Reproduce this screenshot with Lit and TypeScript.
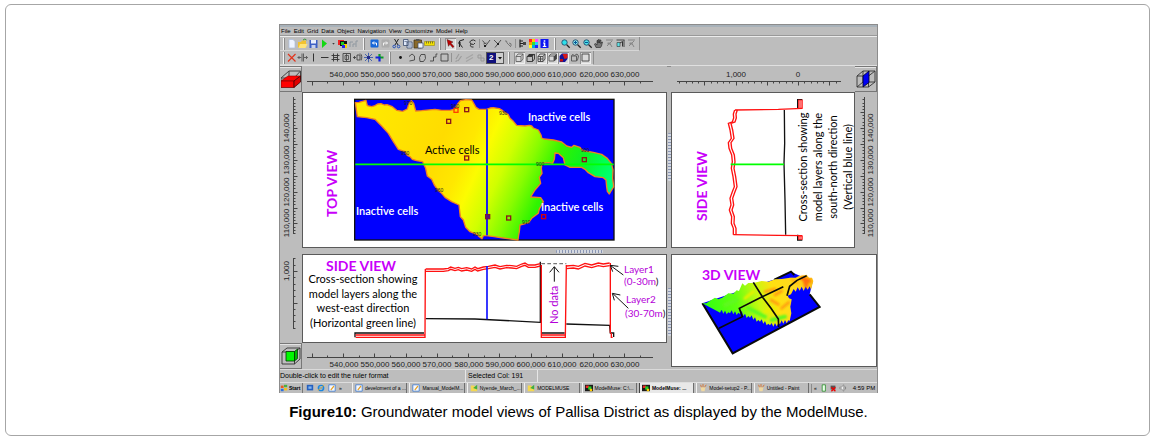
import { LitElement, html, svg, css, type TemplateResult } from "lit";
import { customElement, property } from "lit/decorators.js";

type Pt = [number, number];
const join = (pts: Pt[]) => pts.map((p) => p.join(",")).join(" ");
const shift = (pts: Pt[], dx: number, dy: number): Pt[] => pts.map(([x, y]) => [x + dx, y + dy]);
const range = (n: number) => Array.from({ length: n }, (_, i) => i);

/* ---------- toolbar glyphs, drawn on an 11 x 11 grid ---------- */
const glyphs: Record<string, TemplateResult> = {
  new: svg`<path d="M3 1.500h4l2 2v6.500h-6z" fill="#eef4ff" stroke="#a9bcdc" stroke-width=".7"/>`,
  open: svg`<path d="M1 4h3l1-1.500h4v7h-8z" fill="#f2c230"/><path d="M3 6h7.500l-2 4h-7z" fill="#ffe477"/><path d="M6 2q2-2 3.500 0" stroke="#3a9a3a" fill="none"/>`,
  save: svg`<path d="M1.500 2h8v8h-8z" fill="#3c5fc4"/><path d="M3 2h5v3.500h-5z" fill="#e8eefc"/><path d="M3.500 7h4v3h-4z" fill="#c8d2ec"/>`,
  run: svg`<path d="M3 1.500l5 4-5 4.500z" fill="#12d812"/>`,
  drop: svg`<path d="M3.500 5h4l-2 2z" fill="#111"/>`,
  grid: svg`<path d="M1 2h6v5h-6z" fill="#e22"/><path d="M3 3h7v5h-7z" fill="#111"/><path d="M4 4h3v3h-3z" fill="#2c2"/><path d="M7 6h3v4h-3z" fill="#fc0"/><path d="M5 7h3v3h-3z" fill="#22e"/>`,
  dimchart: svg`<path d="M2 9v-5h3M5 9V6h2.500M8 9V3h2" stroke="#8e979f" fill="none"/>`,
  undo: svg`<rect x="1.500" y="1.500" width="8" height="8" rx="1" fill="#1767d8"/><path d="M3.500 5h4v2.500M5 3.500L3.500 5 5 6.500" stroke="#fff" fill="none"/>`,
  redo: svg`<rect x="1.500" y="1.500" width="8" height="8" rx="1" fill="#acacac"/><path d="M7.500 5h-4v2.500M6 3.500L7.500 5 6 6.500" stroke="#f4f4f4" fill="none"/>`,
  cut: svg`<path d="M3.500 1l3.500 6M7.500 1l-3.500 6" stroke="#222" fill="none"/><circle cx="3.200" cy="8.500" r="1.300" fill="none" stroke="#2450b8"/><circle cx="7.600" cy="8.500" r="1.300" fill="none" stroke="#2450b8"/>`,
  copy: svg`<path d="M1.500 1.500h4.500v6h-4.500zM5 4h5v6h-5z" fill="#dfe8f8" stroke="#3b4b6d" stroke-width=".8"/><path d="M6 6h3M6 8h3M2.500 3.500h2.500" stroke="#3b4b6d" stroke-width=".6"/>`,
  paste: svg`<path d="M1 2h7.500v8h-7.500z" fill="#8a6a2a" stroke="#3a2c12" stroke-width=".7"/><path d="M3 1h3.500v2h-3.500z" fill="#555"/><path d="M5 5h5v5h-5z" fill="#f0f4fc" stroke="#3b4b6d" stroke-width=".7"/>`,
  ruler: svg`<path d="M.5 3.500h10v4h-10z" fill="#f2e000" stroke="#8a7c00" stroke-width=".5"/><path d="M2.500 3.500v2M4.500 3.500v2M6.500 3.500v2M8.500 3.500v2" stroke="#333" stroke-width=".6"/>`,
  pointer: svg`<path d="M2 1.500l6 2.500-2.200 1 3.200 3.500-1.200 1.200-3-3.400-1.300 2z" fill="#c00000" stroke="#300" stroke-width=".4"/>`,
  vertex: svg`<path d="M3.500 9V3L8 1.500M3.500 5.500l3 4" stroke="#222" fill="none"/><circle cx="3.500" cy="5" r="1.200" fill="#222"/>`,
  lasso: svg`<path d="M8.500 3q-2-2-4.500-.5t0 3.500q3 1.500 4-1M4 6q-1.500 2 .5 3h2" stroke="#333" fill="none"/>`,
  splitA: svg`<path d="M1.500 2.500l2.500 3M4.500 8L9 2M2.500 6l3-1" stroke="#444" stroke-width=".9" fill="none"/><path d="M3 7h2v2h-2z" fill="#222"/>`,
  splitB: svg`<path d="M2 2l3 3M3 9.500L9 2" stroke="#444" stroke-width=".9" fill="none"/><path d="M5 5h2v2h-2z" fill="#222"/>`,
  splitC: svg`<path d="M2 3q2-1 2 2M4 5l4 4M6 5q3 0 2 3" stroke="#777" fill="none"/>`,
  tree: svg`<path d="M3 1.500v8M3 3h3M3 5.500h5M3 8h3" stroke="#222" stroke-width="1.200"/><path d="M6 4h3v3h-3z" fill="#444"/>`,
  palette: svg`<path d="M1 1h3v3h-3z" fill="#f22"/><path d="M4 1h3v3h-3z" fill="#fc0"/><path d="M7 1h3v3h-3z" fill="#f4f"/><path d="M1 4h3v3h-3z" fill="#f90"/><path d="M4 4h3v3h-3z" fill="#3d3"/><path d="M7 4h3v3h-3z" fill="#2cf"/><path d="M1 7h3v3h-3z" fill="#ff2"/><path d="M4 7h3v3h-3z" fill="#0ad"/><path d="M7 7h3v3h-3z" fill="#22f"/>`,
  info: svg`<path d="M1.500 1h8v9h-8z" fill="#0c14f4"/><path d="M4.700 2.200h1.600v1.500h-1.600zM4 4.500h2.300v3.500h1v1h-3.500v-1h1v-2.500h-.8z" fill="#fff"/>`,
  zoom: svg`<circle cx="4.500" cy="4.500" r="2.700" fill="#2fe0ea" stroke="#246" stroke-width=".8"/><path d="M6.700 6.700l3 3" stroke="#222" stroke-width="1.300"/>`,
  zoomIn: svg`<circle cx="4.500" cy="4.500" r="2.700" fill="#8fe8ea" stroke="#246" stroke-width=".9"/><path d="M3 4.500h3M4.500 3v3" stroke="#03579b"/><path d="M6.700 6.700l3 3" stroke="#222" stroke-width="1.300"/>`,
  zoomOut: svg`<circle cx="4.500" cy="4.500" r="2.700" fill="#4fe0e6" stroke="#246" stroke-width=".9"/><path d="M3 4.500h3" stroke="#03579b"/><path d="M6.700 6.700l3 3" stroke="#222" stroke-width="1.300"/>`,
  hand: svg`<path d="M3 9.500L1.500 6l1-.5L4 7V2.500h1V5l.3-3.500h1V5l.7-3h1l-.3 3.500 1-1.500h.8l-1 4-1 1.500z" fill="#777" stroke="#222" stroke-width=".6"/>`,
  wedge: svg`<path d="M2 2h7M3 8l5-5M4 5.500h2l2 3.500" stroke="#858585" fill="none"/><path d="M3.500 4.500h3v2h-3z" fill="#888"/>`,
  snap: svg`<path d="M1.500 2h8M9 2v7" stroke="#444" fill="none"/><path d="M2 4.500h3v4h-3z" fill="#5de0e6" stroke="#333" stroke-width=".6"/><path d="M5 5l2.500-1.500v5" stroke="#333" fill="none"/>`,
  del: svg`<path d="M2 2l7.500 7.500M9.500 2L2 9.500" stroke="#e2341c" stroke-width="1.200"/>`,
  move: svg`<path d="M5 1.500v8M6.500 1.500v8M.8 5.500h3.500M7 5.500h3.500M2.500 4L1 5.500 2.500 7M9 4l1.500 1.500L9 7" stroke="#555" stroke-width=".9" fill="none"/>`,
  vline: svg`<path d="M5.500 1.500v8" stroke="#333"/>`,
  hline: svg`<path d="M2 5.500h7.500" stroke="#333"/>`,
  hash: svg`<path d="M3.500 1.500v8M7.500 1.500v8M1.500 3.500h8M1.500 7.500h8M4 5.500h3" stroke="#333" stroke-width=".9"/>`,
  cell: svg`<path d="M2 1.500h7.500v8h-7.500z" fill="none" stroke="#444" stroke-width=".9"/><path d="M4 3.500h3.500v4h-3.500zM5.500 1.500v8" stroke="#444" stroke-width=".8" fill="none"/>`,
  rotate: svg`<path d="M1 5.500h3M2.500 4v3M5 3h3v5h-3zM8 1.500q3 2 1 7" stroke="#444" stroke-width=".9" fill="none"/>`,
  spark: svg`<path d="M5.500 .8v9.500M1 5.500h9M2 2l7 7M9 2L2 9" stroke="#2a4ea8" stroke-width=".8"/><path d="M4 4h3v3h-3z" fill="#222c8c"/>`,
  plus: svg`<path d="M5.500 2v4M5.500 5.500h4" stroke="#0b9d26" stroke-width="2.200"/><path d="M1.500 5.500h4.500M5.500 5v4.500" stroke="#1424d8" stroke-width="2.200"/>`,
  dot: svg`<circle cx="5.500" cy="5.500" r="1.400" fill="#111"/>`,
  poly: svg`<path d="M3 4.500l3-2.500 2.500 2v4l-5 1" stroke="#444" stroke-width=".9" fill="none"/>`,
  polygon: svg`<path d="M2.500 5.500L4 2.500h4l.5 4-2 3h-3.500z" stroke="#444" stroke-width=".9" fill="none"/>`,
  step: svg`<path d="M2 9h3.500V5H8V2h1.500" stroke="#444" stroke-width=".9" fill="none"/>`,
  rect: svg`<path d="M2 2h7v7h-7z" stroke="#444" stroke-width=".9" fill="none"/>`,
  ghostA: svg`<path d="M3 7l3-5M5 9l3.500-5M2.500 9.500l2-1" stroke="#9c9c9c" stroke-width="1.200"/>`,
  ghostB: svg`<path d="M2 6.500l7-4M2 9.500l7-4" stroke="#a4a4a4" stroke-width="1.200"/>`,
  ghostC: svg`<path d="M3 3h3v3h-3zM6 6h3v3h-3z" stroke="#999" fill="none"/>`,
  box: svg`<path d="M2 4.500h5v5h-5zM2 4.500l2-2.500h5v5l-2 2.500M7 4.500l2-2.500" stroke="#555" stroke-width=".8" fill="none"/>`,
  boxTop: svg`<path d="M2 4.500l2-2.500h5.500l-2 2.500z" fill="#333"/><path d="M2 4.500h5.500v5h-5.500zM9.500 2v5l-2 2.500" stroke="#333" stroke-width=".9" fill="none"/>`,
  boxFront: svg`<path d="M2 4.500h5v5h-5zM2 4.500l2-2.500h5v5l-2 2.500M7 4.500l2-2.500M4.500 4.500v5M2 7h5" stroke="#444" stroke-width=".9" fill="none"/>`,
  boxSide: svg`<path d="M2 4h5v5h-5zM2 4l2-2h5.500v5l-2.500 2" stroke="#555" stroke-width=".9" fill="none"/><path d="M7 4l2.500-2v5l-2.500 2z" fill="#444"/>`,
  boxColor: svg`<path d="M1.500 4l2.500-2.500h5.500v5.500l-2.500 3h-5.500z" fill="#14149a"/><path d="M4.500 2h5v4l-3 1z" fill="#d81818"/><path d="M2 7h3v2.500h-3z" fill="#c01010"/>`,
  boxWire: svg`<path d="M2.500 4h5v5h-5zM2.500 4l1-1.500 2 1 2.500-1.500 1.500 2-1 4-1 1" stroke="#555" stroke-width=".9" fill="none"/>`,
};

type Tool = { icon: string; name: string; down?: boolean };
const t = (icon: string, name: string, down = false): Tool => ({ icon, name, down });
const rowOne: Tool[][] = [
  [t("new", "New"), t("open", "Open"), t("save", "Save"), t("run", "Run"), t("drop", "Run options"), t("grid", "Color grid"), t("dimchart", "Charts")],
  [t("undo", "Undo"), t("redo", "Redo"), t("cut", "Cut"), t("copy", "Copy"), t("paste", "Paste"), t("ruler", "Rulers")],
  [t("pointer", "Select", true), t("vertex", "Select vertices"), t("lasso", "Lasso")],
  [t("splitA", "Insert point"), t("splitB", "Delete segment"), t("splitC", "Reverse")],
  [t("tree", "Objects"), t("palette", "Data display"), t("info", "Information")],
  [t("zoom", "Zoom"), t("zoomIn", "Zoom in"), t("zoomOut", "Zoom out"), t("hand", "Pan"), t("wedge", "Extents"), t("snap", "Go to"), t("wedge", "Exaggeration")],
];
const rowTwo: Tool[][] = [
  [t("del", "Delete"), t("move", "Move lines"), t("vline", "Add column"), t("hline", "Add row"), t("hash", "Generate grid"), t("cell", "Subdivide"), t("rotate", "Rotate grid"), t("spark", "Smooth grid"), t("plus", "Grid angle")],
  [t("dot", "Point"), t("poly", "Polyline"), t("polygon", "Polygon"), t("step", "Straight line"), t("rect", "Rectangle")],
  [t("ghostA", "Add part"), t("ghostB", "Add line part"), t("ghostC", "Add area part")],
  [t("box", "Shell", true), t("boxTop", "Top"), t("boxFront", "Front", true), t("boxSide", "Side", true), t("boxColor", "Colored", true), t("boxWire", "Wire"), t("rect", "Frame", true)],
];

@customElement("tool-bar")
export class ToolBar extends LitElement {
  static styles = css`
    :host { display: block; background: #bdbdbd; border-top: 1px solid #ececec; border-bottom: 1px solid #e0e0e0; }
    .row { display: flex; height: 14px; width: max-content; align-items: center; border: 1px solid #d6d6d6; border-width: 0 1px 1px 0; border-right-color: #8f8f8f; padding: 0 2px; box-sizing: border-box; }
    .grip { width: 1px; height: 12px; border-left: 1px solid #f4f4f4; background: #8a8a8a; margin: 0 4px; }
    .grip.first { margin: 0 1px; }
    .thin { width: 1px; height: 9px; background: #939393; margin: 0 1px; }
    button { width: 11px; height: 12px; padding: 0; border: 0; background: none; display: block; }
    button.down { background: #d9d9d9; box-shadow: inset 1px 1px #8f8f8f, inset -1px -1px #eee; }
    button.slim { width: 7px; }
    svg { display: block; width: 11px; height: 11px; }
    .slim svg { width: 7px; }
    .pick { display: grid; align-items: center; width: 18px; height: 12px; }
    .pick > * { grid-area: 1 / 1; }
    .pick svg { width: 8px; height: 8px; justify-self: end; pointer-events: none; }
    select { width: 18px; height: 12px; padding: 0 8px 0 2px; border: 1px solid #555; border-radius: 0; appearance: none; font: bold 8px/10px "Liberation Sans", sans-serif; color: #fff; background: linear-gradient(90deg, #10107c 9px, #cfcfcf 9px); }
  `;
  private button(x: Tool) {
    return html`<button class="${x.down ? "down" : ""} ${x.icon === "drop" ? "slim" : ""}" title=${x.name} aria-label=${x.name}>
      <svg viewBox="0 0 11 11">${glyphs[x.icon]}</svg></button>`;
  }
  render() {
    const grip = html`<span class="grip"></span>`;
    const thin = html`<span class="thin"></span>`;
    const g = (tools: Tool[]) => tools.map((x) => this.button(x));
    return html`
      <div class="row"><span class="grip first"></span>${g(rowOne[0])}${grip}${g(rowOne[1])}${grip}${g(rowOne[2])}${thin}${g(rowOne[3])}${thin}${g(rowOne[4])}${grip}${g(rowOne[5])}</div>
      <div class="row"><span class="grip first"></span>${g(rowTwo[0])}${grip}${g(rowTwo[1])}${thin}${g(rowTwo[2])}
        <span class="pick"><select aria-label="Vertical cells"><option>2</option></select><svg viewBox="0 0 8 8"><path d="M2 3h4L4 5.500z" fill="#111"/></svg></span>${grip}${g(rowTwo[3])}</div>`;
  }
}

/* ---------- rulers ---------- */
@customElement("ruler-strip")
export class RulerStrip extends LitElement {
  @property() side: "top" | "bottom" | "left" | "right" = "top";
  @property({ type: Number }) length = 100;
  @property({ type: Number }) thickness = 26;
  @property({ attribute: false }) line: Pt = [0, 100];
  @property({ type: Number }) origin = 0;
  @property({ type: Number }) step = 10;
  @property({ type: Number }) majorEvery = 2;
  @property({ attribute: false }) labels: [number, string][] = [];
  static styles = css`
    :host { display: block; background: #bdbdbd; min-width: 0; min-height: 0; }
    svg { display: block; width: 100%; height: 100%; }
    text { font: 8px "Liberation Sans", sans-serif; fill: #222; text-anchor: middle; }
    path { stroke: #444; fill: none; }
  `;
  render() {
    const flat = this.side === "top" || this.side === "bottom";
    const base = { top: 15.5, bottom: 14.5, left: 13.5, right: 9.5 }[this.side];
    const textAt = { top: 11, bottom: 24, left: 9, right: 18 }[this.side];
    const dir = this.side === "top" || this.side === "left" ? 1 : -1;
    const [a, b] = this.line;
    const first = Math.ceil((a - this.origin) / this.step);
    const count = Math.floor((b - this.origin) / this.step) - first + 1;
    let d = flat ? `M${a} ${base}H${b}` : `M${base} ${a}V${b}`;
    for (const i of range(count)) {
      const k = first + i;
      const p = Math.round(this.origin + k * this.step) + 0.5;
      const len = (k % this.majorEvery === 0 ? 4 : 2) * dir;
      d += flat ? `M${p} ${base}v${len}` : `M${base} ${p}h${len}`;
    }
    const [w, h] = flat ? [this.length, this.thickness] : [this.thickness, this.length];
    return html`<svg viewBox="0 0 ${w} ${h}">
      ${svg`<path d=${d}/>`}
      ${this.labels.map(([p, s]) =>
        flat ? svg`<text x=${p} y=${textAt}>${s}</text>` : svg`<text transform="translate(${textAt} ${p}) rotate(-90)">${s}</text>`
      )}</svg>`;
  }
}

/* ---------- the four model views ---------- */
const viewStyles = css`
  :host { display: block; background: #fff; outline: 1px solid #5a5a5a; outline-offset: -1px; min-width: 0; }
  svg { display: block; width: 100%; height: auto; }
  text { font: 11px Lato, sans-serif; fill: #000; }
  .head { font: bold 14px Lato, sans-serif; fill: #c800fa; }
  .mid { text-anchor: middle; }
  .white { fill: #fff; font-weight: 600; }
  .tag { font-size: 10px; fill: #b400d8; }
  .tag.big { font-size: 11px; }
  .tick { font: 5px "Liberation Sans", sans-serif; fill: #222; }
  .red { fill: none; stroke: #ff1010; stroke-width: 4; }
  .black { fill: none; stroke: #111; stroke-width: 4; }
`;

const northWest: Pt[] = [[241,38],[252,37],[273,31],[277,47],[290,50],[300,47],[308,42],[318,41],[328,45],[336,44],[352,50],[365,61],[383,64],[397,57],[402,40],[409,32],[416,40],[422,63],[440,62],[480,58],[500,61],[525,61],[538,58],[548,42],[556,32],[572,29],[590,30]];
const east: Pt[] = [[8,35],[18,52],[27,58],[50,58],[60,54],[70,53],[88,56],[98,62],[105,68],[114,73],[120,85],[130,94],[140,106],[165,108],[178,106],[185,108],[190,114],[205,120],[213,135],[215,144],[222,147],[250,150],[275,156],[290,168],[305,172],[312,166],[330,172],[336,180],[345,183],[370,187],[395,193],[412,205],[424,220],[429,240],[428,265],[431,290],[425,300],[418,312],[412,304],[410,290],[408,270],[400,263],[375,260],[355,248],[345,238],[335,232],[300,232],[285,225],[280,203],[265,190],[255,189],[253,208],[248,220],[235,218],[216,220],[214,235],[216,250],[208,262],[212,280],[195,300],[182,321],[212,323],[220,335],[208,357],[205,370],[185,385],[176,398],[150,405],[148,425],[146,435],[144,450],[100,444],[72,440],[50,437],[40,437],[36,446],[28,440],[20,433],[0,425]];
const southWest: Pt[] = [[572,412],[565,390],[556,380],[552,345],[530,335],[510,322],[498,308],[490,302],[478,285],[470,268],[457,258],[452,235],[443,215],[425,212],[412,208],[405,200],[397,196],[390,185],[370,178],[355,155],[340,130],[320,108],[300,88],[275,83],[247,80]];
const basin = [...northWest, ...shift(east, 585, 0), ...southWest];

const wells: Pt[] = [[575,59],[521,94],[575,204],[928,209],[638,380],[701,384]];

@customElement("top-view")
export class TopView extends LitElement {
  static styles = viewStyles;
  render() {
    return html`<svg viewBox="302 92 365 156" role="img" aria-label="Top view of the model grid">
      <defs>
        <linearGradient id="head" gradientUnits="userSpaceOnUse" x1="241" y1="100" x2="1016" y2="450">
          <stop offset="0" stop-color="#ffea00"/><stop offset=".3" stop-color="#ffdc00"/><stop offset=".4" stop-color="#ffe800"/>
          <stop offset=".46" stop-color="#fcfc00"/><stop offset=".54" stop-color="#d0ff00"/><stop offset=".62" stop-color="#88fc00"/>
          <stop offset=".7" stop-color="#30f400"/><stop offset=".78" stop-color="#10f020"/><stop offset=".85" stop-color="#00ff50"/><stop offset=".92" stop-color="#00ff80"/>
        </linearGradient>
      </defs>
      <g transform="translate(275 90) scale(.33333)">
        <rect x="239" y="28" width="778" height="422" fill="#0000ff" stroke="#101010" stroke-width="4"/>
        <polygon points=${join(basin)} fill="url(#head)" stroke="#f08020" stroke-width="4" stroke-linejoin="round"/>
        <path d="M636 58V436" stroke="#1c20e8" stroke-width="6"/>
        <path d="M241 223H1016" stroke="#00ff00" stroke-width="5"/>
        ${wells.map(([x, y]) => svg`<rect x=${x - 6} y=${y - 6} width="12" height="12" fill="none" stroke="#8c1818" stroke-width="4"/>`)}
        <rect x="537" y="55" width="12" height="12" fill="none" stroke="#ff4000" stroke-width="4"/>
        <rect x="800" y="374" width="12" height="12" fill="none" stroke="#d00010" stroke-width="4"/>
        <rect x="632" y="374" width="12" height="12" fill="#5a1878"/>
      </g>
      <text class="tick" x="404" y="105">970</text><text class="tick" x="451" y="108">960</text>
      <text class="tick" x="401" y="155">950</text><text class="tick" x="435" y="192">960</text>
      <text class="tick" x="499" y="115">930</text><text class="tick" x="581" y="152">900</text>
      <text class="tick" x="536" y="166">900</text><text class="tick" x="522" y="224">910</text>
      <text class="tick" x="473" y="236">930</text>
      <text class="white" x="528" y="121">Inactive cells</text>
      <text class="white" x="356" y="215">Inactive cells</text>
      <text class="white" x="541" y="211">Inactive cells</text>
      <text x="425" y="154">Active cells</text>
      <text class="head" transform="translate(337 217) rotate(-90)">TOP VIEW</text>
    </svg>`;
  }
}

const sideWave: Pt[] = [[217,60],[213,72],[214,84],[210,96],[198,100],[203,120],[207,145],[198,158],[200,175],[208,195],[210,215],[207,235],[212,260],[216,290],[210,305],[203,325],[206,345],[201,360],[208,380],[207,400],[213,415],[213,434]];

@customElement("north-south-view")
export class NorthSouthView extends LitElement {
  static styles = viewStyles;
  render() {
    const note = ["Cross-section showing", "model layers along the", "south-north direction", "(Vertical blue line)"];
    return html`<svg viewBox="671 92 184 156" role="img" aria-label="South to north cross-section">
      <g transform="translate(665 90) scale(.33333)">
        <path class="black" d="M398 57V29H412M358 60L359 160 357 220 360 330 362 434M398 434V450H412"/>
        <rect x="400" y="30" width="12" height="26" fill="#ff7070" stroke="#ff1010" stroke-width="2"/>
        <rect x="400" y="438" width="12" height="10" fill="#ff7070" stroke="#ff1010" stroke-width="2"/>
        <path class="red" d="M412 55L340 58 210 60M205 434L340 436 412 437"/>
        <polyline class="red" points=${join(sideWave)}/>
        <polyline class="red" points=${join(shift(sideWave, -8, 0))}/>
        <path d="M197 223H357" stroke="#00ff00" stroke-width="5"/>
      </g>
      <text class="head" transform="translate(707 221) rotate(-90)">SIDE VIEW</text>
      ${note.map((s, i) => svg`<text class="mid" transform="translate(${807 + i * 15} 167) rotate(-90)">${s}</text>`)}
    </svg>`;
  }
}

const westTop: Pt[] = [[452,72],[490,72],[505,72],[520,70],[527,66],[540,70],[550,67],[560,71],[575,68],[590,72],[600,66],[608,71],[625,66],[640,64],[660,60],[675,65],[695,61],[710,62],[725,64],[740,57],[750,54],[760,60],[780,60],[796,56]];
const eastTop: Pt[] = [[874,63],[895,61],[910,64],[930,55],[950,60],[970,54],[985,57],[1004,54]];

@customElement("west-east-view")
export class WestEastView extends LitElement {
  static styles = viewStyles;
  render() {
    const note = ["Cross-section showing", "model layers along the", "west-east direction", "(Horizontal green line)"];
    return html`<svg viewBox="302 254 365 89" role="img" aria-label="West to east cross-section">
      <g transform="translate(275 245) scale(.33333)">
        <path class="black" d="M240 277V264H447M452 221L600 222 796 232V50M798 264H869M874 237L1004 241 1006 264H1016V276"/>
        <path class="red" d="M242 270H449M242 277H450L451 72M799 60V277H871L874 60M799 270H871M1006 54L1006 264M1009 264V277H1013"/>
        <polyline class="red" points=${join(westTop)}/><polyline class="red" points=${join(shift(westTop, 0, 7))}/>
        <polyline class="red" points=${join(eastTop)}/><polyline class="red" points=${join(shift(eastTop, 0, 8))}/>
        <path d="M636 63V223" stroke="#1010ff" stroke-width="5"/>
        <path d="M799 56H874" stroke="#777" stroke-width="4" stroke-dasharray="11 7"/>
        <path d="M838 110V66M824 82L838 65 852 82M1045 90L1007 62M1013 80L1006 61 1030 64M1060 190L1014 146M1018 166L1012 145 1036 150" stroke="#111" stroke-width="3" fill="none"/>
      </g>
      <text class="head" x="326" y="271">SIDE VIEW</text>
      ${note.map((s, i) => svg`<text class="mid" x="363" y=${283 + Math.round(i * 14.6)}>${s}</text>`)}
      <text class="tag big" transform="translate(558 324) rotate(-90)">No data</text>
      <text class="tag" x="624" y="273">Layer1</text><text class="tag" x="624" y="285">(0-30m<tspan fill="#111">)</tspan></text>
      <text class="tag" x="626" y="303">Layer2</text><text class="tag" x="625" y="317">(30-70m<tspan fill="#111">)</tspan></text>
    </svg>`;
  }
}

const ridge: Pt[] = [[112,175],[124,175],[135,167],[150,158],[160,163],[172,158],[190,145],[205,146],[215,136],[222,138],[232,115],[240,122],[250,114],[265,114],[290,108],[310,110],[330,103],[350,102],[375,98],[392,98],[400,94],[425,89],[432,98],[441,98],[445,108],[438,134]];
const fringeEast: Pt[] = [[434,124],[428,134],[422,124],[416,138],[410,125],[404,137],[398,127],[392,140],[386,132],[378,148],[368,152],[372,160],[380,163],[376,185],[379,205],[374,228]];
const fringeSouth: Pt[] = range(43).map((i) => {
  const x = 370 - i * 5;
  const base = x > 320 ? 226 + (370 - x) * 0.3 : x > 230 ? 240 - (320 - x) * 0.38 : 204 - (230 - x) * 0.06;
  return [x, Math.round(base + [0, 7, -4, 5, -6, 3][i % 6])] as Pt;
});

@customElement("solid-view")
export class SolidView extends LitElement {
  static styles = viewStyles;
  render() {
    return html`<svg viewBox="671 254 206 113" role="img" aria-label="3D view of the model">
      <defs>
        <linearGradient id="relief" gradientUnits="userSpaceOnUse" x1="115" y1="190" x2="440" y2="110">
          <stop offset="0" stop-color="#30ff10"/><stop offset=".3" stop-color="#60ff10"/><stop offset=".5" stop-color="#c8f810"/>
          <stop offset=".65" stop-color="#ffe010"/><stop offset=".85" stop-color="#ffd820"/><stop offset="1" stop-color="#ffc010"/>
        </linearGradient>
        <filter id="soft"><feGaussianBlur stdDeviation="3"/></filter>
      </defs>
      <g transform="translate(665 245) scale(.33333)">
        <polygon points="112,175 203,325 464,186 434,148 443,110 378,80 325,104" fill="#0000ff"/>
        <path d="M112 175L203 325 464 186 434 148M388 90L378 80 328 104" fill="none" stroke="#0a0a0a" stroke-width="6"/>
        <polygon points=${join([...ridge, ...fringeEast, ...fringeSouth])} fill="url(#relief)"/>
        <g filter="url(#soft)" fill="none" stroke-linecap="round">
          <path d="M300 140L330 132M330 150L350 138M350 190L372 172M318 165L340 178" stroke="#ff9a10" stroke-width="8"/>
          <path d="M412 100L432 108M420 108L424 122" stroke="#ff7008" stroke-width="12"/>
          <path d="M240 160L265 140M300 200L330 190" stroke="#e8f000" stroke-width="9"/>
          <path d="M180 180L215 165M250 190L300 215M320 225L360 215" stroke="#60f820" stroke-width="12"/>
          <path d="M380 104L395 112" stroke="#ffae10" stroke-width="8"/>
        </g>
        <path d="M265 112L294 158 318 190 340 222 341 246M162 250L232 215 223 190 290 156 355 125M366 152L374 124 396 106 425 92" fill="none" stroke="#0a0a0a" stroke-width="5"/>
      </g>
      <text class="head" x="702" y="280">3D VIEW</text>
    </svg>`;
  }
}

/* ---------- window ---------- */
const eastings: [number, string][] = range(10).map((i) => [Math.round(41.5 + i * 31.25), `${540 + i * 10},000`]);
const northings: [number, string][] = range(4).map((i) => [Math.round(36 + i * 31.8), `${140 - i * 10},000`]);

const page = svg`<path d="M1 1h8v8h-8z" fill="#f4f8ff" stroke="#3b78d0"/><path d="M3 7l4-5 1 1-4 5z" fill="#e8a020"/>`;
const folder = svg`<path d="M1 2h4l1 1h3v6h-8z" fill="#f4d850"/><path d="M4 5l5-4v6z" fill="#3fae3f"/>`;
const muse = svg`<path d="M0 1h10v8h-10z" fill="#1b1b1b"/><path d="M1 2h4v3h-4z" fill="#e22"/><path d="M4 3h4v4h-4z" fill="#2c2"/><path d="M6 6h3v3h-3z" fill="#fc0"/>`;
const paint = svg`<path d="M2 4h6l-1 5h-4z" fill="#f0d8a0"/><path d="M3 4l-1-3M5 4V0M7 4l2-3" stroke="#d86a20"/>`;
const tasks = [
  { icon: page, name: "develoment of a ..." },
  { icon: page, name: "Manual_ModelM..." },
  { icon: folder, name: "Nyende_March_..." },
  { icon: folder, name: "MODELMUSE" },
  { icon: muse, name: "ModelMuse: C:\\..." },
  { icon: muse, name: "ModelMuse: ...", active: true },
  { icon: paint, name: "Model-setup2 - P..." },
  { icon: paint, name: "Untitled - Paint" },
];

@customElement("app-root")
export class AppRoot extends LitElement {
  static styles = css`
    :host { display: block; font-family: "Liberation Sans", sans-serif; color: #000; }
    .card { margin: 4px 7px 0 5px; padding: 19px 16px 14px 18px; border: 1px solid #a6a6a6; border-radius: 6px; background: #fff; }
    figure { margin: 0 auto; max-width: 599px; }
    .window { border: 1px solid #8c8c8c; border-bottom: 0; background: #bdbdbd; overflow: hidden; }
    .strip { height: 2px; background: #a8b2ba; }
    .menu { display: flex; gap: 3px; height: 9px; padding-left: 1px; border-bottom: 1px solid #999; box-sizing: border-box; }
    button { font: inherit; color: inherit; border: 0; background: none; padding: 0; }
    .menu button { font-size: 6px; line-height: 8px; }
    .work { display: grid; grid-template-columns: 22px minmax(0, 365fr) 4px minmax(0, 184fr) 22px; grid-template-rows: 26px auto 6px auto 26px; border-top: 0; box-shadow: inset 0 1px #8c8c8c; }
    .solid { grid-column: 4 / 6; grid-row: 4 / 6; align-self: start; }
    .corner { border: 1px solid #777; border-left: 0; box-shadow: inset 0 1px #e4e4e4; display: flex; align-items: center; justify-content: center; }
    .corner svg { display: block; width: 20px; height: 20px; }
    .split { display: flex; align-items: center; justify-content: center; background: #bdbdbd; }
    .grab { border-radius: 1px; }
    .split.v .grab { width: 3px; height: 48px; background: repeating-linear-gradient(#8a96b4 0 1px, #d4d8e0 1px 3px); }
    .split.upper { padding-bottom: 26px; }
    .split.lower { padding-top: 26px; }
    .split.h { justify-content: flex-end; padding-right: 64px; }
    .split.h .grab { width: 47px; height: 3px; background: repeating-linear-gradient(90deg, #8a96b4 0 1px, #d4d8e0 1px 3px); }
    .status { display: flex; height: 14px; box-sizing: border-box; border-top: 1px solid #dadada; border-bottom: 1px solid #dedede; font-size: 7px; line-height: 12px; }
    .status span { box-sizing: border-box; border-right: 1px solid #e6e6e6; white-space: nowrap; }
    .hint { flex: 0 0 186px; }
    .col { flex: 0 0 72px; padding-left: 2px; }
    .tasks { display: flex; align-items: center; height: 10px; font-size: 5px; line-height: 9px; gap: 2px; overflow: hidden; }
    .tasks svg { width: 8px; height: 8px; flex: none; display: block; }
    .tasks button { display: flex; align-items: center; gap: 2px; height: 10px; white-space: nowrap; overflow: hidden; box-sizing: border-box; }
    .tasks .start { width: 23px; font-weight: bold; border-right: 1px solid #777; gap: 1px; flex: none; }
    .quick { display: flex; gap: 3px; width: 44px; padding-left: 1px; align-items: center; flex: none; }
    .tasks .task { flex: 1 1 56px; min-width: 0; padding-left: 2px; border-left: 1px solid #f2f2f2; border-right: 1px solid #6e6e6e; }
    .tasks .active { background: #e8e8e8; font-weight: bold; border-left-color: #444; }
    .tray { display: flex; gap: 2px; align-items: center; flex: 0 0 63px; border-left: 1px solid #8c8c8c; padding-left: 2px; }
    .tray time { padding-left: 4px; font-size: 6px; }
    figcaption { padding-top: 10px; font-size: 15px; line-height: 18px; text-align: center; }
  `;
  render() {
    const menus = ["File", "Edit", "Grid", "Data", "Object", "Navigation", "View", "Customize", "Model", "Help"];
    return html`<main class="card"><figure>
      <div class="window">
        <div class="strip"></div>
        <nav class="menu">${menus.map((m) => html`<button>${m}</button>`)}</nav>
        <tool-bar></tool-bar>
        <div class="work">
          <button class="corner" aria-label="Top view layer">
            <svg viewBox="0 0 20 20"><path d="M0 9L8 2h11.500v8L13 18H0z" fill="none" stroke="#444"/><path d="M0 9h13V18M13 9l6.500-7M8 2v7" stroke="#444" fill="none"/><path d="M0 12l7-5h12.500L13 12z" fill="#f00" stroke="#900" stroke-width=".6"/><path d="M0 12h13v6.500H0z" fill="#f00" stroke="#600" stroke-width=".6"/><path d="M13 12l6.500-5v6L13 18.500z" fill="#e00000" stroke="#400" stroke-width=".8"/></svg>
          </button>
          <ruler-strip side="top" length="365" .line=${[5, 351]} origin="41" step="15.625" .labels=${eastings}></ruler-strip>
          <span></span>
          <ruler-strip side="top" length="184" .line=${[6, 170]} origin="127" step="6.25" majorEvery="5" .labels=${[[65, "1,000"], [127, "0"]]}></ruler-strip>
          <button class="corner" aria-label="Side view column">
            <svg viewBox="0 0 20 20"><path d="M1 7h11.500v11H1zM1 7l6-5h12v11l-6.500 5M12.500 7l6.500-5M7 2v11L1 18M7 13h12" fill="none" stroke="#333" stroke-width=".9"/><path d="M7 7l6-5v11.500L7 18z" fill="#0000f4" stroke="#002" stroke-width=".8"/></svg>
          </button>

          <ruler-strip side="left" length="156" thickness="22" .line=${[5, 142]} origin="36" step="3.18" majorEvery="5" .labels=${northings}></ruler-strip>
          <top-view></top-view>
          <div class="split v upper"><span class="grab"></span></div>
          <north-south-view></north-south-view>
          <ruler-strip side="right" length="156" thickness="22" .line=${[5, 142]} origin="36" step="3.18" majorEvery="5" .labels=${northings}></ruler-strip>

          <span></span><div class="split h"><span class="grab"></span></div><span></span><span></span><span></span>

          <ruler-strip side="left" length="89" thickness="22" .line=${[4, 75]} origin="17" step="6.3" majorEvery="5" .labels=${[[17, "1,000"]]}></ruler-strip>
          <west-east-view></west-east-view>
          <div class="split v lower"><span class="grab"></span></div>
          <solid-view class="solid"></solid-view>

          <button class="corner" aria-label="Front view row">
            <svg viewBox="0 0 20 20"><path d="M1 6h12.500v12H1zM1 6l5-4h13v11l-5.500 5M13.500 6L19 2" fill="none" stroke="#333" stroke-width=".9"/><path d="M13.500 5.500l3-2.500v9.500l-3 2.500z" fill="#00b800" stroke="#030" stroke-width=".7"/><path d="M5 5.500h8.500V15H5z" fill="#00f800" stroke="#030" stroke-width=".8"/></svg>
          </button>
          <ruler-strip side="bottom" length="365" .line=${[5, 351]} origin="41" step="15.625" .labels=${eastings}></ruler-strip>
          <span></span>
        </div>
        <div class="status"><span class="hint">Double-click to edit the ruler format</span><span class="col">Selected Col: 191</span></div>
        <div class="tasks">
          <button class="start"><svg viewBox="0 0 10 10"><path d="M1 2h3.500v3h-3.500z" fill="#e85a20"/><path d="M5 1h4v3h-4z" fill="#4ab040"/><path d="M1 6h3.500v3h-3.500z" fill="#2a70e0"/><path d="M5 5h4v3h-4z" fill="#f4c020"/></svg>Start</button>
          <span class="quick">
            <svg viewBox="0 0 10 10"><path d="M1 1h8v7h-8z" fill="#2460c0"/><path d="M3 3h4v3h-4z" fill="#7fb4f0"/></svg>
            <svg viewBox="0 0 10 10"><circle cx="5" cy="5" r="3.300" fill="none" stroke="#1a86e0" stroke-width="1.800"/><path d="M2 5h6" stroke="#1a86e0"/><path d="M1 8Q6 5 9 1" stroke="#f0b020" fill="none"/></svg>
            <svg viewBox="0 0 10 10">${page}</svg><span>»</span>
          </span>
          ${tasks.map((k) => html`<button class="task ${k.active ? "active" : ""}"><svg viewBox="0 0 10 10">${k.icon}</svg>${k.name}</button>`)}
          <span class="tray"><span>«</span>
            <svg viewBox="0 0 10 10"><path d="M4 1h4v8h-4z" fill="#e8ffe8" stroke="#2a8a2a"/></svg>
            <svg viewBox="0 0 10 10"><path d="M2 2h6v5h-6z" fill="#555"/><path d="M3 4l5 5M8 4L3 9" stroke="#e00" stroke-width="1.600"/></svg>
            <svg viewBox="0 0 10 10"><path d="M1 4h2l3-3v8l-3-3h-2z" fill="#eee" stroke="#666" stroke-width=".7"/><path d="M7.500 3q2 2 0 4" stroke="#777" fill="none"/></svg>
            <time>4:59 PM</time></span>
        </div>
      </div>
      <figcaption><b>Figure10:</b> Groundwater model views of Pallisa District as displayed by the ModelMuse.</figcaption>
    </figure></main>`;
  }
}
